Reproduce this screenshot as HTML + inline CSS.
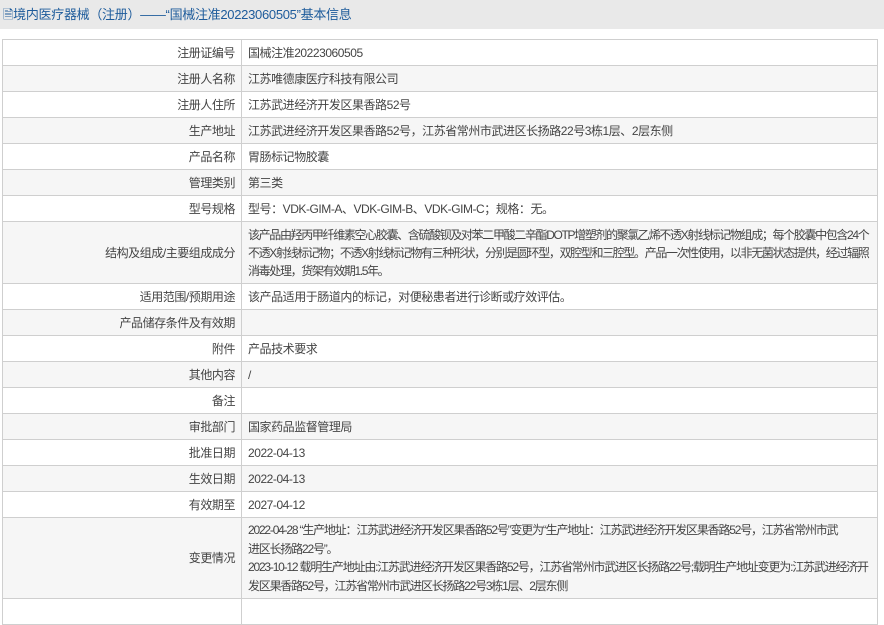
<!DOCTYPE html>
<html><head><meta charset="utf-8"><style>
body{margin:0;background:#fff;font-family:"Liberation Sans","Noto Sans CJK SC",sans-serif;font-size:12px;color:#444;width:884px;height:592px;overflow:hidden}
.hd{height:29px;background:#e9e9e9;color:#1d5b9b;font-size:13px;line-height:29px;padding-left:3px;letter-spacing:-0.3px}
table{position:absolute;left:2px;top:39px;width:876px;border-collapse:collapse;table-layout:fixed}
td{border:1px solid #cfcfcf;height:25px;padding:0 6px;line-height:18px;vertical-align:middle;letter-spacing:-0.45px;white-space:nowrap;overflow:hidden}
td.l{width:226px;text-align:right}
tr:nth-child(even) td{background:#f6f6f6}
td.t{padding-top:3px;padding-bottom:3px}
td.n{letter-spacing:-1.2px}
td.m{letter-spacing:-1.35px}
</style></head><body>
<div class="hd">🗎境内医疗器械（注册）——“国械注准20223060505”基本信息</div>
<table>
<tr><td class="l">注册证编号</td><td>国械注准20223060505</td></tr>
<tr><td class="l">注册人名称</td><td>江苏唯德康医疗科技有限公司</td></tr>
<tr><td class="l">注册人住所</td><td>江苏武进经济开发区果香路52号</td></tr>
<tr><td class="l">生产地址</td><td>江苏武进经济开发区果香路52号，江苏省常州市武进区长扬路22号3栋1层、2层东侧</td></tr>
<tr><td class="l">产品名称</td><td>胃肠标记物胶囊</td></tr>
<tr><td class="l">管理类别</td><td>第三类</td></tr>
<tr><td class="l">型号规格</td><td>型号：VDK-GIM-A、VDK-GIM-B、VDK-GIM-C；规格：无。</td></tr>
<tr><td class="l">结构及组成/主要组成成分</td><td class="t m" style="height:55px">该产品由羟丙甲纤维素空心胶囊、含硫酸钡及对苯二甲酸二辛酯DOTP增塑剂的聚氯乙烯不透X射线标记物组成；每个胶囊中包含24个<br>不透X射线标记物；不透X射线标记物有三种形状，分别是圆环型，双腔型和三腔型。产品一次性使用，以非无菌状态提供，经过辐照<br>消毒处理，货架有效期1.5年。</td></tr>
<tr><td class="l">适用范围/预期用途</td><td>该产品适用于肠道内的标记，对便秘患者进行诊断或疗效评估。</td></tr>
<tr><td class="l">产品储存条件及有效期</td><td></td></tr>
<tr><td class="l">附件</td><td>产品技术要求</td></tr>
<tr><td class="l">其他内容</td><td>/</td></tr>
<tr><td class="l">备注</td><td></td></tr>
<tr><td class="l">审批部门</td><td>国家药品监督管理局</td></tr>
<tr><td class="l">批准日期</td><td>2022-04-13</td></tr>
<tr><td class="l">生效日期</td><td>2022-04-13</td></tr>
<tr><td class="l">有效期至</td><td>2027-04-12</td></tr>
<tr><td class="l">变更情况</td><td class="t n" style="height:67px;line-height:18.5px">2022-04-28 “生产地址：江苏武进经济开发区果香路52号”变更为“生产地址：江苏武进经济开发区果香路52号，江苏省常州市武<br>进区长扬路22号”。<br>2023-10-12 载明生产地址由:江苏武进经济开发区果香路52号，江苏省常州市武进区长扬路22号;载明生产地址变更为:江苏武进经济开<br>发区果香路52号，江苏省常州市武进区长扬路22号3栋1层、2层东侧</td></tr>
<tr><td class="l">&nbsp;</td><td></td></tr>
</table>
</body></html>
